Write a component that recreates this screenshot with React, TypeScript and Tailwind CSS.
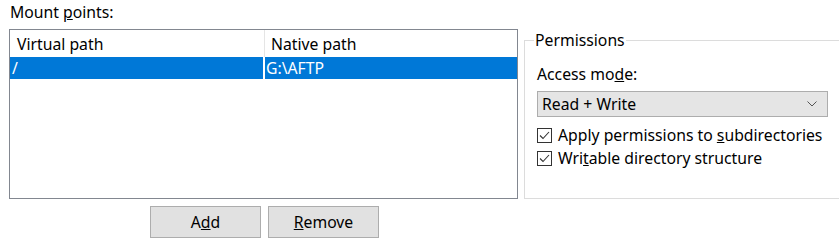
const Check = () => (
  <span className="flex h-[15px] w-[15px] items-center justify-center border border-[#333333] bg-white">
    <svg width="11" height="9" viewBox="0 0 11 9" fill="none">
      <path d="M1 4.5 L4 7.5 L10 1" stroke="#333333" strokeWidth="1.1" />
    </svg>
  </span>
);

const App = () => {
  return (
    <div
      className="flex h-[246px] w-[839px] overflow-hidden bg-white text-[15.75px] text-black"
      style={{ fontFamily: '"Segoe UI", "Noto Sans", "Open Sans", sans-serif' }}
    >
      {/* left: mount points list */}
      <div className="ml-[9px] flex w-[511px] flex-col">
        <div className="h-[29px] pl-[1px] pt-[2px] leading-[20px]">
          Mount <span className="underline">p</span>oints:
        </div>
        <div className="h-[170px] border border-[#828790] bg-white">
          <div className="flex h-[27px] items-center leading-[20px]">
            <div className="flex h-full w-[255px] items-center border-r border-[#e5e5e5] pl-[7px]">
              Virtual path
            </div>
            <div className="pl-[6px]">Native path</div>
          </div>
          <div className="flex h-[22px] leading-[20px] text-white">
            <div className="flex w-[253px] items-center bg-[#0078d7] pl-[2px]">/</div>
            <div className="ml-[2px] flex w-[252px] items-center bg-[#0078d7] pl-[1px]">
              G:\AFTP
            </div>
          </div>
        </div>
        <div className="mt-[7px] flex gap-[7px] pl-[141px]">
          <button className="h-[32px] w-[111px] border border-[#adadad] bg-[#e1e1e1] leading-[20px]">
            A<span className="underline">d</span>d
          </button>
          <button className="h-[32px] w-[111px] border border-[#adadad] bg-[#e1e1e1] leading-[20px]">
            <span className="underline">R</span>emove
          </button>
        </div>
      </div>

      {/* right: permissions group */}
      <div className="ml-[6px] pt-[31px]">
        <fieldset className="h-[168px] w-[330px] border border-[#dcdcdc] pl-[12px]">
          <legend className="ml-[-3px] px-[1px] leading-[18px]">Permissions</legend>
          <div className="mt-[15px] leading-[20px]">
            Access mo<span className="underline">d</span>e:
          </div>
          <div className="mt-[7px] flex h-[26px] w-[291px] items-center justify-between border border-[#adadad] bg-[#e5e5e5] pl-[4px] pr-[10px] leading-[20px]">
            <span>Read + Write</span>
            <svg width="10" height="6" viewBox="0 0 10 6" fill="none">
              <path d="M0.5 0.5 L5 5 L9.5 0.5" stroke="#555555" strokeWidth="1" />
            </svg>
          </div>
          <div className="mt-[8px] flex items-center gap-[6px] leading-[20px]">
            <Check />
            <span>
              Apply permissions to <span className="underline">s</span>ubdirectories
            </span>
          </div>
          <div className="mt-[3px] flex items-center gap-[6px] leading-[20px]">
            <Check />
            <span>
              Wri<span className="underline">t</span>able directory structure
            </span>
          </div>
        </fieldset>
      </div>
    </div>
  );
};

export default App;
